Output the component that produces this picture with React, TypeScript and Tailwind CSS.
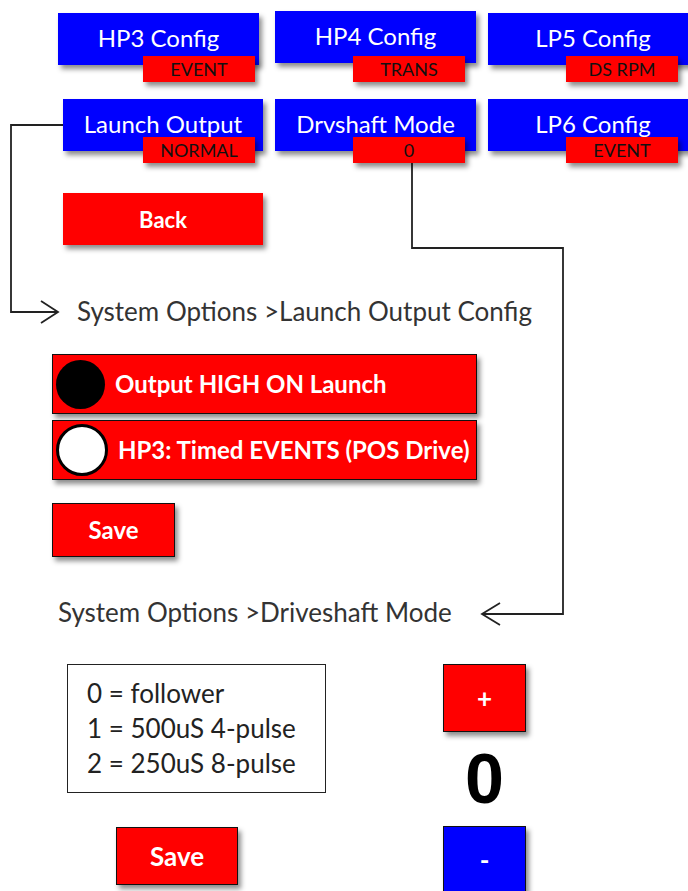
const font = "font-['Lato','Liberation_Sans',sans-serif]";

function ConfigBox({
  label,
  value,
  className,
  badgeClass,
}: {
  label: string;
  value: string;
  className: string;
  badgeClass: string;
}) {
  return (
    <div
      className={`relative shrink-0 h-[52px] bg-[#0000ff] shadow-[3px_4px_5px_rgba(0,0,0,0.45)] flex items-center justify-center text-white text-[24px] leading-none pb-[2px] ${className}`}
    >
      {label}
      <div
        className={`absolute w-[112px] h-[26px] bg-[#ff0000] flex items-center justify-center text-[#111] text-[18px] leading-none shadow-[3px_4px_5px_rgba(0,0,0,0.45)] ${badgeClass}`}
      >
        {value}
      </div>
    </div>
  );
}

function RadioRow({ label, checked }: { label: string; checked: boolean }) {
  return (
    <div className="w-[425px] h-[60px] bg-[#ff0000] border-[1.5px] border-[#111] shadow-[3px_4px_5px_rgba(0,0,0,0.45)] flex items-center pl-[3px] gap-[10px]">
      {checked ? (
        <div className="w-[49px] h-[49px] rounded-full bg-black" />
      ) : (
        <div className="w-[52px] h-[52px] rounded-full bg-white border-[3px] border-black" />
      )}
      <span className="text-white font-bold text-[24px]">{label}</span>
    </div>
  );
}

export default function App() {
  return (
    <div className={`relative w-[688px] h-[891px] overflow-hidden bg-white ${font}`}>
      {/* connectors */}
      <svg
        className="absolute inset-0 pointer-events-none"
        width={688}
        height={891}
        fill="none"
        stroke="#222"
        strokeWidth={1.8}
      >
        <path d="M63 125 H11 V312 H57" />
        <path d="M41 301 L58 312 L41 323" />
        <path d="M412 163 V248 H563 V614 H483" />
        <path d="M500 603 L482 614 L500 625" />
      </svg>

      {/* top row */}
      <div className="flex items-start pt-[11px] pl-[58px]">
        <ConfigBox label="HP3 Config" value="EVENT" className="w-[201px] mt-[2px]" badgeClass="left-[85px] top-[43px]" />
        <ConfigBox label="HP4 Config" value="TRANS" className="w-[201px] ml-[16px]" badgeClass="left-[78px] top-[45px]" />
        <ConfigBox label="LP5 Config" value="DS RPM" className="w-[230px] ml-[12px] mt-[2px] pr-[20px]" badgeClass="left-[78px] top-[43px]" />
      </div>

      {/* second row */}
      <div className="flex items-start mt-[34px] pl-[63px]">
        <ConfigBox label="Launch Output" value="NORMAL" className="w-[200px]" badgeClass="left-[80px] top-[38px]" />
        <ConfigBox label="Drvshaft Mode" value="0" className="w-[201px] ml-[12px]" badgeClass="left-[78px] top-[38px]" />
        <ConfigBox label="LP6 Config" value="EVENT" className="w-[230px] ml-[12px] pr-[20px]" badgeClass="left-[78px] top-[38px]" />
      </div>

      <button className="ml-[63px] mt-[42px] w-[200px] h-[52px] bg-[#ff0000] text-white font-bold text-[22px] shadow-[3px_4px_5px_rgba(0,0,0,0.45)] flex items-center justify-center">
        Back
      </button>

      <div className="ml-[77px] mt-[50px] h-[32px] flex items-center text-[#333] text-[26px]">
        System Options &gt;Launch Output Config
      </div>

      <div className="ml-[52px] mt-[27px] flex flex-col gap-[6px]">
        <RadioRow label="Output HIGH ON Launch" checked />
        <RadioRow label="HP3: Timed EVENTS (POS Drive)" checked={false} />
      </div>

      <button className="ml-[52px] mt-[23px] w-[123px] h-[54px] bg-[#ff0000] border-[1.5px] border-[#111] text-white font-bold text-[24px] shadow-[3px_4px_5px_rgba(0,0,0,0.45)] flex items-center justify-center">
        Save
      </button>

      <div className="ml-[58px] mt-[39px] h-[32px] flex items-center text-[#333] text-[26px]">
        System Options &gt;Driveshaft Mode
      </div>

      <div className="flex items-start mt-[36px]">
        <div className="flex flex-col">
          <div className="ml-[67px] w-[259px] h-[129px] border-[1.5px] border-[#222] flex flex-col justify-center pl-[19px] text-[#222] text-[26px] leading-[35px]">
            <span>0 = follower</span>
            <span>1 = 500uS 4-pulse</span>
            <span>2 = 250uS 8-pulse</span>
          </div>
          <button className="ml-[116px] mt-[34px] w-[122px] h-[58px] bg-[#ff0000] border-[1.5px] border-[#111] text-white font-bold text-[26px] shadow-[3px_4px_5px_rgba(0,0,0,0.45)] flex items-center justify-center">
            Save
          </button>
        </div>
        <div className="ml-[117px] flex flex-col items-center">
          <button className="w-[83px] h-[68px] bg-[#ff0000] border-[1.5px] border-[#111] text-white font-bold text-[26px] shadow-[3px_4px_5px_rgba(0,0,0,0.45)] flex items-center justify-center">
            +
          </button>
          <div className="h-[94px] flex items-center justify-center font-['Liberation_Sans',sans-serif] font-bold text-[70px] text-black">
            0
          </div>
          <button className="w-[83px] h-[68px] bg-[#0000ff] border-[1.5px] border-[#111] text-white font-bold text-[26px] shadow-[3px_4px_5px_rgba(0,0,0,0.45)] flex items-center justify-center">
            -
          </button>
        </div>
      </div>
    </div>
  );
}
